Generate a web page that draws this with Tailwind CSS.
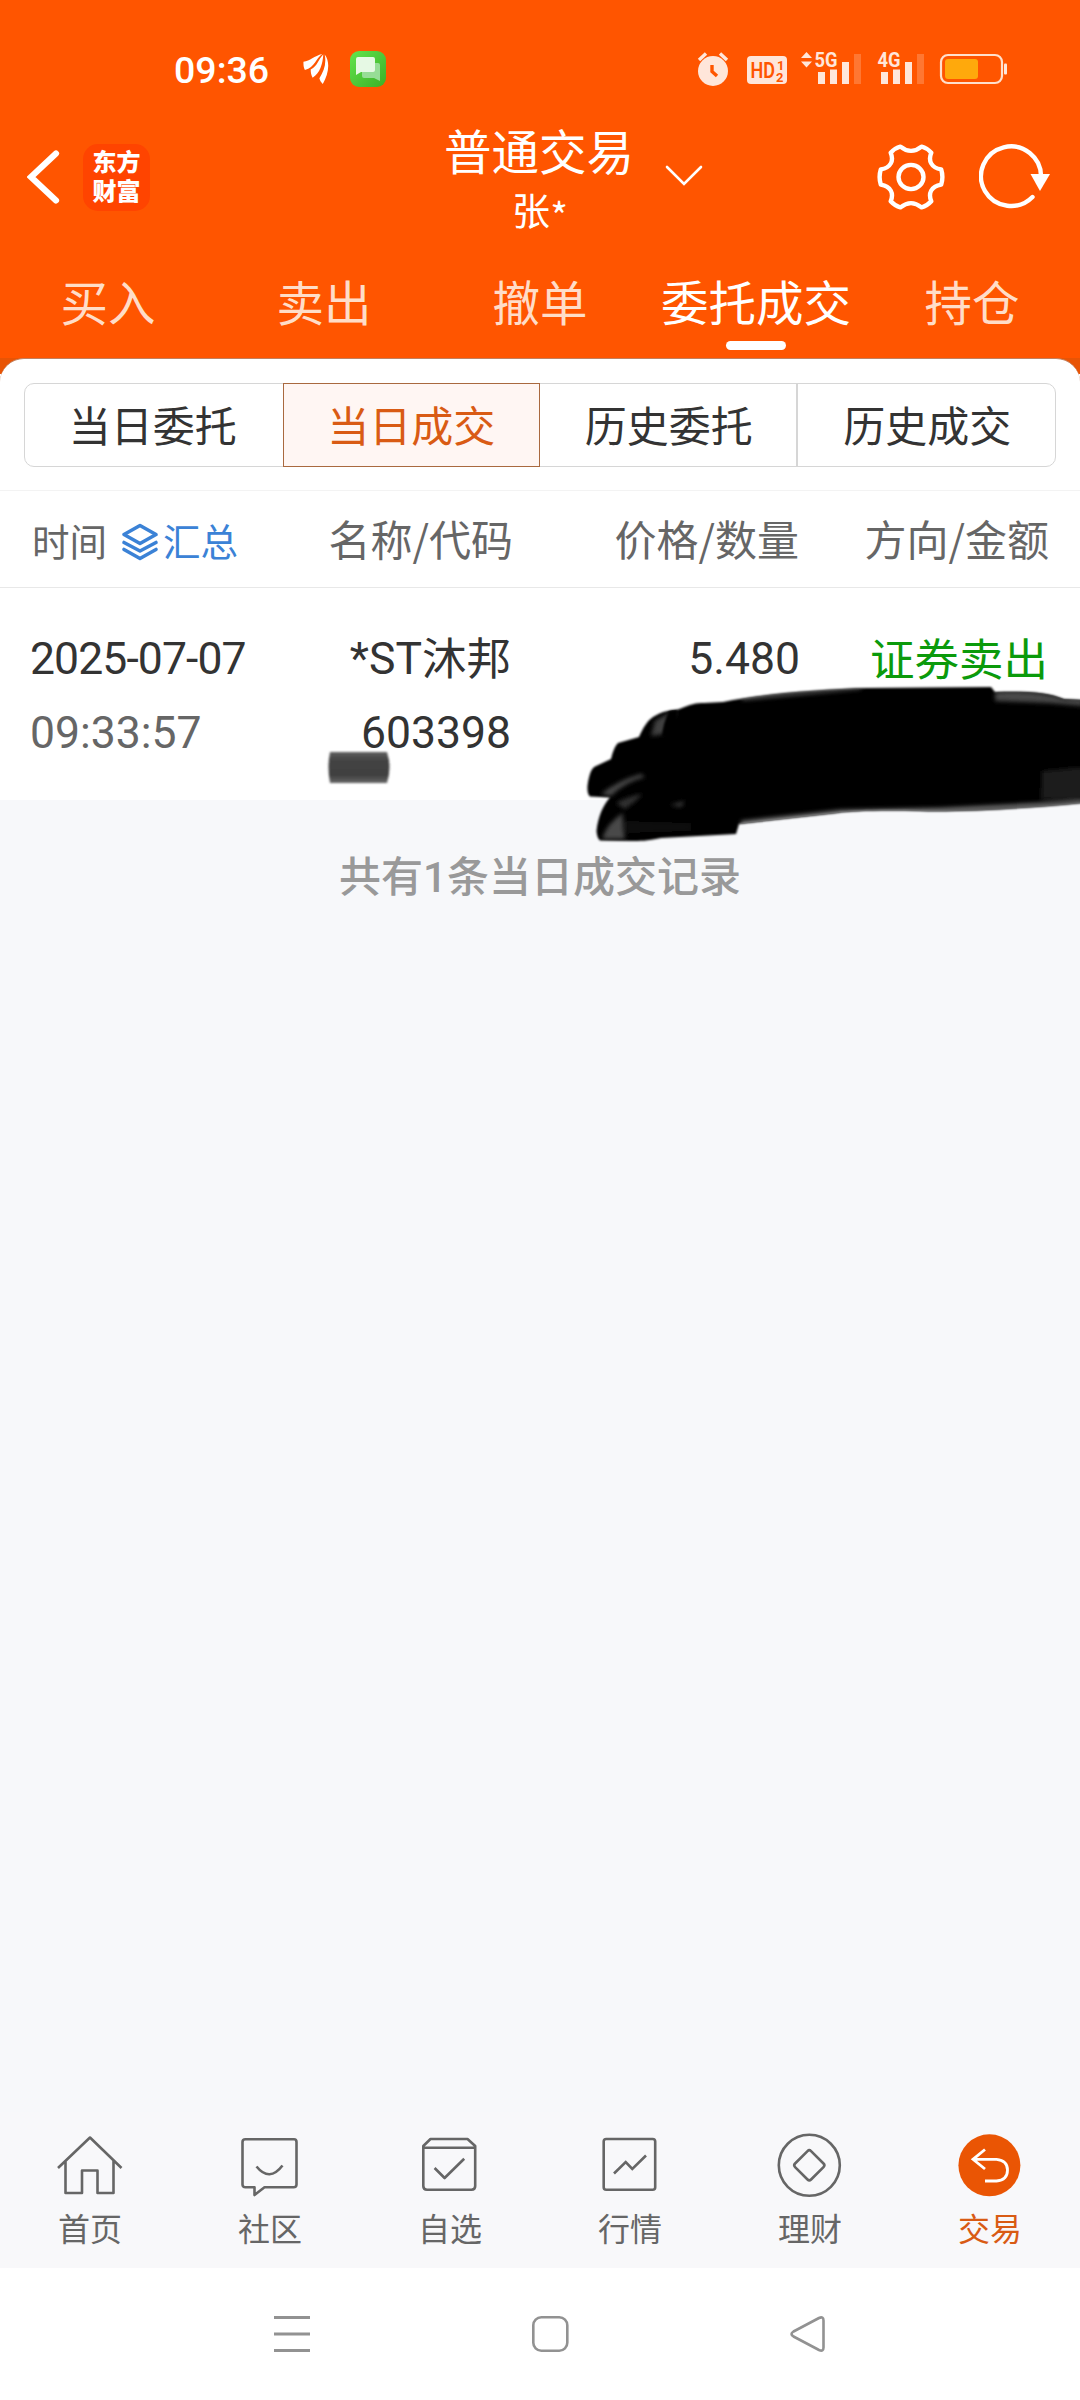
<!DOCTYPE html>
<html lang="zh-CN">
<head>
<meta charset="utf-8">
<title>普通交易</title>
<script src="https://cdn.jsdelivr.net/npm/@tailwindcss/browser@4"></script>
</head>
<body class="flex h-[2400px] w-[1080px] flex-col overflow-hidden bg-[#f7f8fa] font-['Noto_Sans_CJK_SC',sans-serif] text-[#333]">

<header class="h-[358px] shrink-0 bg-[#ff5500] text-white">
  <!-- status bar -->
  <div class="flex h-[112px] items-center pt-[26px] pl-[174px]">
    <span class="w-[129px] pt-px font-[Roboto,sans-serif] text-[37.500px] leading-[40px] font-medium">09:36</span>
    <svg class="h-[30px] w-[27px]" viewBox="0 0 27 31" fill="#fff"><path d="M0 8C7 7 11 2 19.500 0C13 4 12 14 1.500 16.500C0 14 0 11 0 8Z"/><path d="M20.500 .5C15 6 15 12 7.500 16C7.500 19 8 22 9.500 24.500C17 20 20 10 20.500 .5Z"/><path d="M22 .5C28 8 26 21 20 31C18 29 17 27 16.500 25C21 18 24 10 22 .5Z"/></svg>
    <svg class="ml-[20px] h-[36px] w-[36px]" viewBox="0 0 36 36"><defs><linearGradient id="msg" x1="0" y1="0" x2="1" y2="1"><stop offset="0" stop-color="#62e44d"/><stop offset="1" stop-color="#3caf26"/></linearGradient></defs><rect width="36" height="36" rx="9" fill="url(#msg)"/><path d="M14 12H28Q30 12 30 14V30L24 27H14Q12 27 12 25V14Q12 12 14 12Z" fill="#97dd96"/><path d="M8 6H23Q25 6 25 8V19Q25 21 23 21H11L6 24V8Q6 6 8 6Z" fill="#e6f9e4"/></svg>
    <svg class="ml-[308px] h-[40px] w-[316px]" viewBox="694 49 316 40" fill="#ffe6da">
      <circle cx="713" cy="71" r="15"/><path d="M699 60L706 53.500M727 60L720 53.500" stroke="#ffe6da" stroke-width="3.400" fill="none"/><path d="M712 65V71.500L717 76" stroke="#ff5500" stroke-width="3.400" fill="none"/>
      <rect x="747" y="56" width="40" height="28" rx="4"/>
      <g fill="#ff5500" font-family="Roboto" font-weight="700"><text x="750.500" y="78" font-size="22.500" textLength="24.500" lengthAdjust="spacingAndGlyphs" font-weight="600">HD</text><text x="777" y="69.500" font-size="13">1</text><text x="776" y="81.500" font-size="13">2</text></g>
      <path d="M806.500 52L812 58H801ZM806.500 67.500L812 61.500H801Z"/>
      <g font-family="Roboto" font-weight="700" font-size="20.500"><text x="814.500" y="67" textLength="23" lengthAdjust="spacingAndGlyphs">5G</text><text x="877.500" y="67" textLength="23" lengthAdjust="spacingAndGlyphs">4G</text></g>
      <path d="M818 72h7V84h-7zM830 69.500h7V84h-7zM842 62h7V84h-7zM881 72h7V84h-7zM893 69.500h7V84h-7zM905 62h7V84h-7z"/><path d="M854 54h7V84h-7zM917 54h7V84h-7z" fill="#ff7732"/>
      <rect x="941" y="55" width="61" height="28" rx="7" fill="none" stroke="#ffe0cc" stroke-width="2.200"/><rect x="945" y="59" width="33" height="20" rx="3" fill="#ffa90c"/><rect x="1004" y="63.500" width="3" height="11" rx="1"/>
    </svg>
  </div>

  <!-- title bar -->
  <div class="grid h-[130px] grid-cols-[360px_1fr_360px] items-center">
    <div class="flex items-center pl-[27px]">
      <svg class="h-[56px] w-[34px]" viewBox="0 0 34 56" fill="none" stroke="#fff" stroke-width="6.200" stroke-linecap="round"><path d="M29 4.500L4 28L29 51.500"/></svg>
      <div class="ml-[22px] grid h-[67px] w-[67px] place-content-center rounded-[15px] bg-[#ff4400] pb-[4px] text-center text-[24px] leading-[29.500px] font-black">东方<br>财富</div>
    </div>
    <div class="relative pt-[4px] text-center leading-[59px]">
      <div class="pr-[2px] text-[47.500px]">普通交易</div>
      <div class="text-[38px]">张<span class="inline-block translate-y-[6px]">*</span></div>
      <svg class="absolute top-[47px] left-[305px] h-[24px] w-[38px]" viewBox="0 0 38 24" fill="none" stroke="#fff" stroke-width="2.600" stroke-linecap="round"><path d="M2 4L19 21L36 4"/></svg>
    </div>
    <div class="flex items-center justify-end pr-[29px]">
      <svg class="h-[66px] w-[68px]" viewBox="0 0 68 68" preserveAspectRatio="none" fill="none" stroke="#fff" stroke-width="4.400" stroke-linejoin="round"><circle cx="34" cy="34" r="12.500"/><path d="M23.500 2.600Q34 11.500 44.500 2.600Q50 4.200 54.300 9C51 17 54 24.500 64.200 26.200Q66.600 34 64.200 41.800C54 43.500 51 51 54.300 59Q50 63.800 44.500 65.400Q34 56.500 23.500 65.400Q18 63.800 13.700 59C17 51 14 43.500 3.800 41.800Q1.400 34 3.800 26.200C14 24.500 17 17 13.700 9Q18 4.200 23.500 2.600Z"/></svg>
      <svg class="ml-[34px] h-[66px] w-[72px]" viewBox="0 0 72 66" fill="none"><path d="M53.500 53A30 29.800 0 1 1 62 33" stroke="#fff" stroke-width="4.400" stroke-linecap="round"/><path d="M51.500 30H71L61 47Z" fill="#fff"/></svg>
    </div>
  </div>

  <!-- tabs -->
  <nav class="grid grid-cols-5 pt-[35px] text-center text-[47.500px] leading-[48px] text-[#ffddc8]">
    <div>买入</div><div>卖出</div><div>撤单</div>
    <div class="flex flex-col items-center text-white">委托成交<span class="mt-[16px] h-[9px] w-[60px] rounded-full bg-white"></span></div>
    <div>持仓</div>
  </nav>
</header>

<div class="shrink-0 bg-[linear-gradient(#e85405_16px,#fff_16px)]">
  <section class="rounded-t-[24px] border-t border-[#c08060] bg-white px-[24px] pt-[24px] pb-[23px]">
    <div class="grid h-[84px] grid-cols-4 rounded-[10px] border border-[#d6d6d6] text-center text-[42px] leading-[80px]">
      <div class="pr-[2px]">当日委托</div>
      <div class="-my-px border border-[#a9693f] bg-[#fff6f3] text-[#d95b14]">当日成交</div>
      <div class="border-r-2 border-[#d6d6d6] pl-[2px]">历史委托</div>
      <div class="pl-[2px]">历史成交</div>
    </div>
  </section>
</div>

<section class="relative h-[310px] shrink-0 bg-white">
  <div class="grid h-[98px] grid-cols-[513px_286px_250px] items-center border-y border-t-[#f3f3f3] border-b-[#e8e8e8] pb-[3px] text-right text-[42px] leading-[80px] text-[#666]">
    <div class="flex items-center justify-between pl-[32px]">
      <div class="flex items-center pt-[4px] text-[37.500px]">时间
        <svg class="mt-[4px] ml-[14px] h-[38px] w-[38px]" viewBox="0 0 38 38" fill="none" stroke="#3b82d6" stroke-width="3.600" stroke-linejoin="round" stroke-linecap="round"><path d="M19 2.500L35 11.500L19 20.500L3 11.500ZM3 19.500L19 28L35 19.500M3 26.500L19 35.500L35 26.500"/></svg>
        <span class="ml-[4px] text-[#3b82d6]">汇总</span>
      </div>
      <span>名称/代码</span>
    </div>
    <span>价格/数量</span>
    <span>方向/金额</span>
  </div>
  <div class="grid grid-cols-[256px_255px_289px_248px] pt-[35px] text-right font-[Roboto,'Noto_Sans_CJK_SC',sans-serif] text-[44.500px] leading-[73.500px]">
    <div class="pl-[30px] text-left tracking-[-0.900px]">2025-07-07<br><span class="tracking-[0px] text-[#666]">09:33:57</span></div>
    <div>*ST<span class="inline-block translate-y-px">沐邦</span><br>603398</div>
    <div>5.480</div>
    <div class="pt-[2px] text-[#0b9a0b]">证券卖出</div>
  </div>
  <!-- marker strokes over the amount columns -->
  <svg class="absolute top-[189px] left-[321px] z-10 h-[180px] w-[759px]" viewBox="320 680 759 180">
    <defs>
      <filter id="s1" x="-10%" y="-10%" width="120%" height="120%"><feGaussianBlur stdDeviation="1.200"/></filter>
      <filter id="s2" x="-10%" y="-40%" width="120%" height="180%"><feGaussianBlur stdDeviation="2"/></filter>
      <linearGradient id="pen" x1="0" y1="0" x2="0" y2="1"><stop offset="0" stop-color="#606060"/><stop offset=".25" stop-color="#444"/><stop offset=".75" stop-color="#404040"/><stop offset="1" stop-color="#666"/></linearGradient>
      <path id="o" d="M638 738C642 729 646 722 652 718C662 712 670 711 677 710.500C690 705 695 704 703 704L722 703C760 695 820 690 867 689L990 688L994 693C1025 692 1047 693 1063 700L1082 701V804C1020 810 960 813 919 812C880 811 850 812 836 814L738 825L735 835L660 839C645 842 640 842 630 842L599 841.500Q596 839 595.500 832C597 818 602 806 609 798.500L589 797.500Q586 795 586.500 787C588 776 590 770 594 767.500L610 760C612 752 614 747 617 744Z"/>
      <clipPath id="ink"><use href="#o"/></clipPath>
    </defs>
    <path d="M329 753H386Q391 768 386 784H329Q326 768 329 753Z" fill="url(#pen)" filter="url(#s1)"/>
    <use href="#o" filter="url(#s1)"/>
    <g clip-path="url(#ink)">
      <g filter="url(#s2)">
        <path d="M654 722Q664 715 676 712L663 735L650 737Z" fill="#404040"/>
        <path d="M600 795Q618 781 640 775L644 778Q624 783 610 797Z" fill="#484848"/>
        <path d="M601 840Q606 824 622 814Q621 826 624 840Z" fill="#4a4a4a"/>
        <path d="M615 804Q628 797 642 795Q634 803 624 810Z" fill="#303030"/>
        <path d="M669 806L684 802L680 808Z" fill="#3a3a3a"/>
        <path d="M624 822L690 824V832L625 834Z" fill="#0c0c0c"/>
        <path d="M994 693Q1035 690 1063 700H1082V707L1048 704L994 702Z" fill="#4a4a4a"/>
        <path d="M1041 772L1082 768V801L1040 800Z" fill="#1a1a1a"/>
        <path d="M740 822L840 811L940 809L1082 802V806L919 815L740 829Z" fill="#777"/>
        <path d="M740 698L860 688V690L742 701Z" fill="#666"/>
      </g>
      <path d="M668 712Q662 724 661 738L676 738V711Z" filter="url(#s1)"/>
    </g>
  </svg>
</section>

<p class="mt-[53px] text-center text-[42px] leading-[42px] font-medium text-[#999]">共有<span class="font-[Roboto]">1</span>条当日成交记录</p>

<nav class="mt-auto grid h-[156px] shrink-0 grid-cols-6 bg-[#f8f8fa] text-center text-[32px] leading-[40px] text-[#666]">
  <div class="flex flex-col items-center gap-[9px]"><svg class="h-[86px] w-[70px]" viewBox="0 0 70 86" fill="none" stroke="#666" stroke-width="2.600" stroke-linejoin="round"><path d="M3 56L35 25.500L66.500 56M10.500 49V81H27V58.500H42.500V81H58.500V49"/></svg><span>首页</span></div>
  <div class="flex flex-col items-center gap-[9px]"><svg class="h-[86px] w-[70px]" viewBox="0 0 70 86" fill="none" stroke="#666" stroke-width="2.600" stroke-linejoin="round"><path d="M10.500 27.300H59Q61.500 27.300 61.500 30V72.500Q61.500 75.300 58.500 75.300H29.500L19.500 83V75.300H10.500Q7.500 75.300 7.500 72.500V30Q7.500 27.300 10.500 27.300Z"/><path d="M21.500 54.500Q34.500 70.500 47.500 53.500"/></svg><span>社区</span></div>
  <div class="flex flex-col items-center gap-[9px]"><svg class="h-[86px] w-[70px]" viewBox="0 0 70 86" fill="none" stroke="#666" stroke-width="2.600" stroke-linejoin="round"><path d="M8.300 34V74Q8.300 77.700 12 77.700H56.500Q60.200 77.700 60.200 74V34L52.500 27H15.500ZM8.300 35.700H60.200M19.600 56L29.600 66L49.200 46.700"/></svg><span>自选</span></div>
  <div class="flex flex-col items-center gap-[9px]"><svg class="h-[86px] w-[70px]" viewBox="0 0 70 86" fill="none" stroke="#666" stroke-width="2.600"><rect x="8.700" y="27" width="51.500" height="50.700" rx="2.500"/><path d="M19 61.500L30.700 50L37.300 57L51 43.500"/></svg><span>行情</span></div>
  <div class="flex flex-col items-center gap-[9px]"><svg class="h-[86px] w-[70px]" viewBox="0 0 70 86" fill="none" stroke="#666" stroke-width="2.600" stroke-linejoin="round"><circle cx="34.300" cy="53.300" r="30.500"/><rect x="23" y="42" width="22.600" height="22.600" rx="2.500" transform="rotate(45 34.300 53.300)"/></svg><span>理财</span></div>
  <div class="flex flex-col items-center gap-[9px] text-[#d95b14]"><svg class="h-[86px] w-[70px]" viewBox="0 0 70 86" fill="none" stroke="#fff" stroke-width="2.800"><circle cx="34.400" cy="53.300" r="31" fill="#ea5504" stroke="none"/><path d="M30 37.500L18 47.300L30 57M18 47.300H41.500Q52.500 48.500 52.500 58Q52.500 68 41.500 69H30"/></svg><span>交易</span></div>
</nav>

<div class="flex h-[132px] shrink-0 items-center bg-white pl-[274px]">
  <svg class="h-[38px] w-[36px]" viewBox="0 0 36 38" stroke="#929292" stroke-width="3"><path d="M0 2.500H36M0 19H36M0 35.500H36"/></svg>
  <svg class="ml-[222px] h-[38px] w-[37px]" viewBox="0 0 37 38" fill="none" stroke="#929292" stroke-width="2.600"><rect x="1.300" y="2.300" width="34" height="33.400" rx="8"/></svg>
  <svg class="ml-[221px] h-[38px] w-[36px]" viewBox="0 0 36 38" fill="none" stroke="#929292" stroke-width="2.600" stroke-linejoin="round"><path d="M29 3Q33.500 1 33.500 5.500V32.500Q33.500 37 29 35L3.500 21.500Q-.5 19 3.500 16.500Z"/></svg>
</div>
</body>
</html>
